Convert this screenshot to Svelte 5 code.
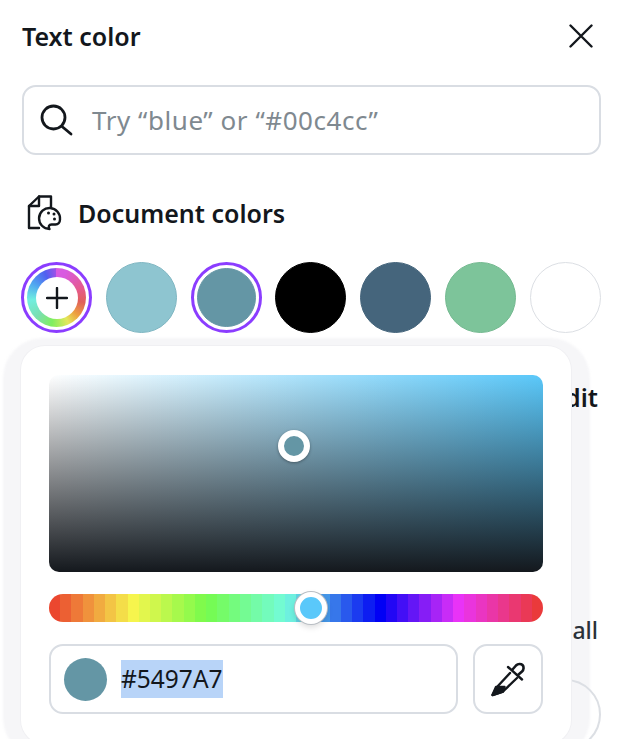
<script lang="ts">
  const swatches = [
    { color: "#8ec5d0", border: "#7fb6c2" },
    { color: "#6496a5", selected: true },
    { color: "#000000" },
    { color: "#45657c" },
    { color: "#7dc49a", border: "#74b990" },
    { color: "#ffffff", border: "#dcdfe4" },
  ];

  // hue track is drawn in flat bands, like the reference
  const anchors: [number, number[]][] = [
    [0, [234, 58, 45]],
    [0.17, [246, 245, 77]],
    [0.32, [117, 251, 76]],
    [0.48, [115, 251, 222]],
    [0.67, [0, 0, 245]],
    [0.83, [234, 51, 247]],
    [1, [234, 58, 45]],
  ];

  function hueAt(t: number) {
    let i = 0;
    while (i < anchors.length - 2 && t > anchors[i + 1][0]) i++;
    const [t0, c0] = anchors[i];
    const [t1, c1] = anchors[i + 1];
    const k = (t - t0) / (t1 - t0);
    return `rgb(${c0.map((v, n) => Math.round(v + (c1[n] - v) * k)).join(",")})`;
  }

  const bandCount = 44;
  const hueBands = Array.from({ length: bandCount }, (_, i) => {
    const from = (i / bandCount) * 100;
    const to = ((i + 1) / bandCount) * 100;
    return `${hueAt((i + 0.5) / bandCount)} ${from}% ${to}%`;
  }).join(",");
</script>

<div class="page">
  <header class="header">
    <h1>Text color</h1>
    <button class="close" aria-label="Close">
      <svg width="24" height="24" viewBox="0 0 24 24" fill="none" stroke="#13171c" stroke-width="2.4" stroke-linecap="round">
        <path d="M1.500 1.500 22.500 22.500M22.500 1.500 1.500 22.500" />
      </svg>
    </button>
  </header>

  <div class="search">
    <svg width="34" height="32" viewBox="0 0 34 32" fill="none" stroke="#13171c" stroke-width="2.8" stroke-linecap="round">
      <circle cx="13.500" cy="13.500" r="11.500" />
      <path d="M22 22.500 31 30" />
    </svg>
    <span class="placeholder">Try “blue” or “#00c4cc”</span>
  </div>

  <div class="section-title">
    <svg width="36" height="36" viewBox="0 0 36 36" fill="none" stroke="#13171c" stroke-width="2.400" stroke-linejoin="round" stroke-linecap="round">
      <path d="M24 12V1.500H12L2 11V33H12" />
      <path d="M12 1.500V11H2" />
      <path d="M33 24.500a10.500 10.500 0 1 0-10.500 9.500c-1.500-2.500-.5-4.500 2-4.500h4c2.500 0 4.500-2 4.500-5Z" />
      <circle cx="21.500" cy="18" r="1.500" fill="#13171c" stroke="none" />
      <circle cx="27" cy="19" r="1.500" fill="#13171c" stroke="none" />
      <circle cx="27.500" cy="24" r="1.500" fill="#13171c" stroke="none" />
    </svg>
    <span>Document colors</span>
  </div>

  <div class="swatches">
    <button class="swatch ring" aria-label="Add color">
      <span class="rainbow">
        <span class="plus">
          <svg width="22" height="22" viewBox="0 0 22 22" stroke="#13171c" stroke-width="2.400" stroke-linecap="round">
            <path d="M11 1V21M1 11H21" />
          </svg>
        </span>
      </span>
    </button>
    {#each swatches as s}
      <button
        class="swatch"
        class:ring={s.selected}
        aria-label={s.color}
      >
        <span class="fill" style:background={s.color} style:border-color={s.border ?? s.color}></span>
      </button>
    {/each}
  </div>

  <div class="popover-shade"></div>
  <div class="behind edit"><span>Edit</span></div>
  <div class="behind see-all"><span>See all</span></div>
  <div class="behind-circle"></div>

  <div class="popover">
    <div class="sv">
      <span class="sv-thumb"></span>
    </div>
    <div class="hue" style:background={`linear-gradient(to right,${hueBands})`}>
      <span class="hue-thumb"></span>
    </div>
    <div class="hex-row">
      <div class="hex-field">
        <span class="hex-dot"></span>
        <span class="hex-text">#5497A7</span>
      </div>
      <button class="dropper" aria-label="Pick color">
        <svg width="36" height="36" viewBox="0 0 36 36" fill="none" stroke="#13171c" stroke-width="2.400" stroke-linecap="round" stroke-linejoin="round">
          <path d="M18 6 32 18.500" />
          <path d="M22.500 8.500 26 4.500c2-2 5-2 6.500-.5s1.500 4.500-.5 6.500L28 14" stroke-width="2.600" />
          <path d="M20 12 7 26 2.500 34 13 30.500 27 17" />
          <path d="M6 26 2.500 34 13 30.500 14.500 26Z" fill="#13171c" />
        </svg>
      </button>
    </div>
  </div>
</div>

<style>
  :global(body) {
    margin: 0;
    background: #fff;
    font-family: "Noto Sans", "Open Sans", sans-serif;
    color: #13171c;
  }

  button {
    padding: 0;
    border: none;
    background: none;
    font: inherit;
  }

  .page {
    position: relative;
    width: 628px;
    height: 739px;
    overflow: hidden;
    box-sizing: border-box;
    padding: 0 27px 0 22px;
  }

  .header {
    display: flex;
    justify-content: space-between;
    align-items: center;
    height: 72px;
    padding-right: 8px;
    margin-bottom: 13px;
  }

  h1 {
    margin: 0;
    font-size: 25px;
    font-weight: 600;
    line-height: 1;
  }

  .close {
    display: flex;
  }

  .search {
    display: flex;
    align-items: center;
    gap: 18px;
    height: 70px;
    box-sizing: border-box;
    padding-left: 16px;
    border: 2px solid #d9dde3;
    border-radius: 14px;
  }

  .placeholder {
    font-size: 26px;
    letter-spacing: 0.55px;
    color: #7f8990;
  }

  .section-title {
    display: flex;
    align-items: center;
    gap: 15px;
    height: 36px;
    margin: 40px 0 31px 5px;
    font-size: 25px;
    font-weight: 600;
  }

  .swatches {
    display: flex;
    justify-content: space-between;
    margin-left: -1px;
  }

  .swatch {
    display: flex;
    align-items: center;
    justify-content: center;
    box-sizing: border-box;
    width: 71px;
    height: 71px;
    border-radius: 50%;
  }

  .swatch.ring {
    border: 3.500px solid #8b3dff;
    padding: 3px;
  }

  .fill {
    display: block;
    width: 100%;
    height: 100%;
    box-sizing: border-box;
    border: 1.500px solid transparent;
    border-radius: 50%;
  }

  .rainbow {
    display: flex;
    align-items: center;
    justify-content: center;
    width: 100%;
    height: 100%;
    border-radius: 50%;
    background: conic-gradient(
      #d85ae0 20deg,
      #e65a8c 70deg,
      #e0605a 100deg,
      #eda040 130deg,
      #e4e85a 155deg,
      #80ee60 190deg,
      #7adfb0 225deg,
      #70eee0 265deg,
      #50a8f0 300deg,
      #5060f0 335deg,
      #a050e8 360deg
    );
  }

  .plus {
    display: flex;
    align-items: center;
    justify-content: center;
    width: 42px;
    height: 42px;
    border-radius: 50%;
    background: #fff;
  }

  .popover-shade {
    position: absolute;
    top: 338px;
    left: 3px;
    width: 587px;
    height: 420px;
    border-radius: 40px;
    background: #f6f6f8;
    filter: blur(1px);
  }

  .behind {
    position: absolute;
    right: 30px;
    font-size: 25px;
    line-height: 30px;
    color: #2a3138;
  }

  .edit {
    top: 382px;
    font-weight: 600;
    color: #13171c;
  }

  .see-all {
    top: 615px;
    font-size: 23px;
    font-weight: 500;
  }

  .behind-circle {
    position: absolute;
    top: 679px;
    left: 530px;
    width: 71px;
    height: 71px;
    box-sizing: border-box;
    border: 2px solid #dcdfe4;
    border-radius: 50%;
  }

  .popover {
    position: absolute;
    top: 346px;
    left: 21px;
    width: 550px;
    box-sizing: border-box;
    display: flex;
    flex-direction: column;
    gap: 22px;
    padding: 29px 28px 30px;
    background: #fff;
    border-radius: 24px;
    box-shadow: 0 0 0 1px #f0f0f3;
  }

  .sv {
    position: relative;
    height: 197px;
    border-radius: 10px;
    background:
      linear-gradient(to top, #14181d, rgba(20, 24, 29, 0)),
      linear-gradient(to right, #fff, rgba(255, 255, 255, 0)),
      #5ac8fa;
  }

  .sv-thumb {
    position: absolute;
    left: 229px;
    top: 55px;
    width: 32px;
    height: 32px;
    box-sizing: border-box;
    border: 6px solid #fff;
    border-radius: 50%;
    background: #6496a5;
    box-shadow: 0 1px 3px rgba(0, 0, 0, 0.35);
  }

  .hue {
    position: relative;
    height: 28px;
    border-radius: 14px;
  }

  .hue-thumb {
    position: absolute;
    left: 246px;
    top: -2px;
    width: 32px;
    height: 32px;
    box-sizing: border-box;
    border: 5px solid #fff;
    border-radius: 50%;
    background: #5ac8fa;
    box-shadow: 0 0 0 1px #b9bec4, 0 3px 6px rgba(0, 0, 0, 0.15);
  }

  .hex-row {
    display: flex;
    gap: 15px;
  }

  .hex-field {
    flex: 1;
    display: flex;
    align-items: center;
    gap: 14px;
    height: 70px;
    box-sizing: border-box;
    padding-left: 13px;
    border: 2px solid #d9dde3;
    border-radius: 14px;
  }

  .hex-dot {
    width: 43px;
    height: 43px;
    border-radius: 50%;
    background: #6496a5;
  }

  .hex-text {
    font-size: 24.500px;
    line-height: 38px;
    background: #b8d4f8;
    color: #13171c;
  }

  .dropper {
    display: flex;
    align-items: center;
    justify-content: center;
    width: 70px;
    height: 70px;
    box-sizing: border-box;
    border: 2px solid #d9dde3;
    border-radius: 14px;
    background: #fff;
  }
</style>
